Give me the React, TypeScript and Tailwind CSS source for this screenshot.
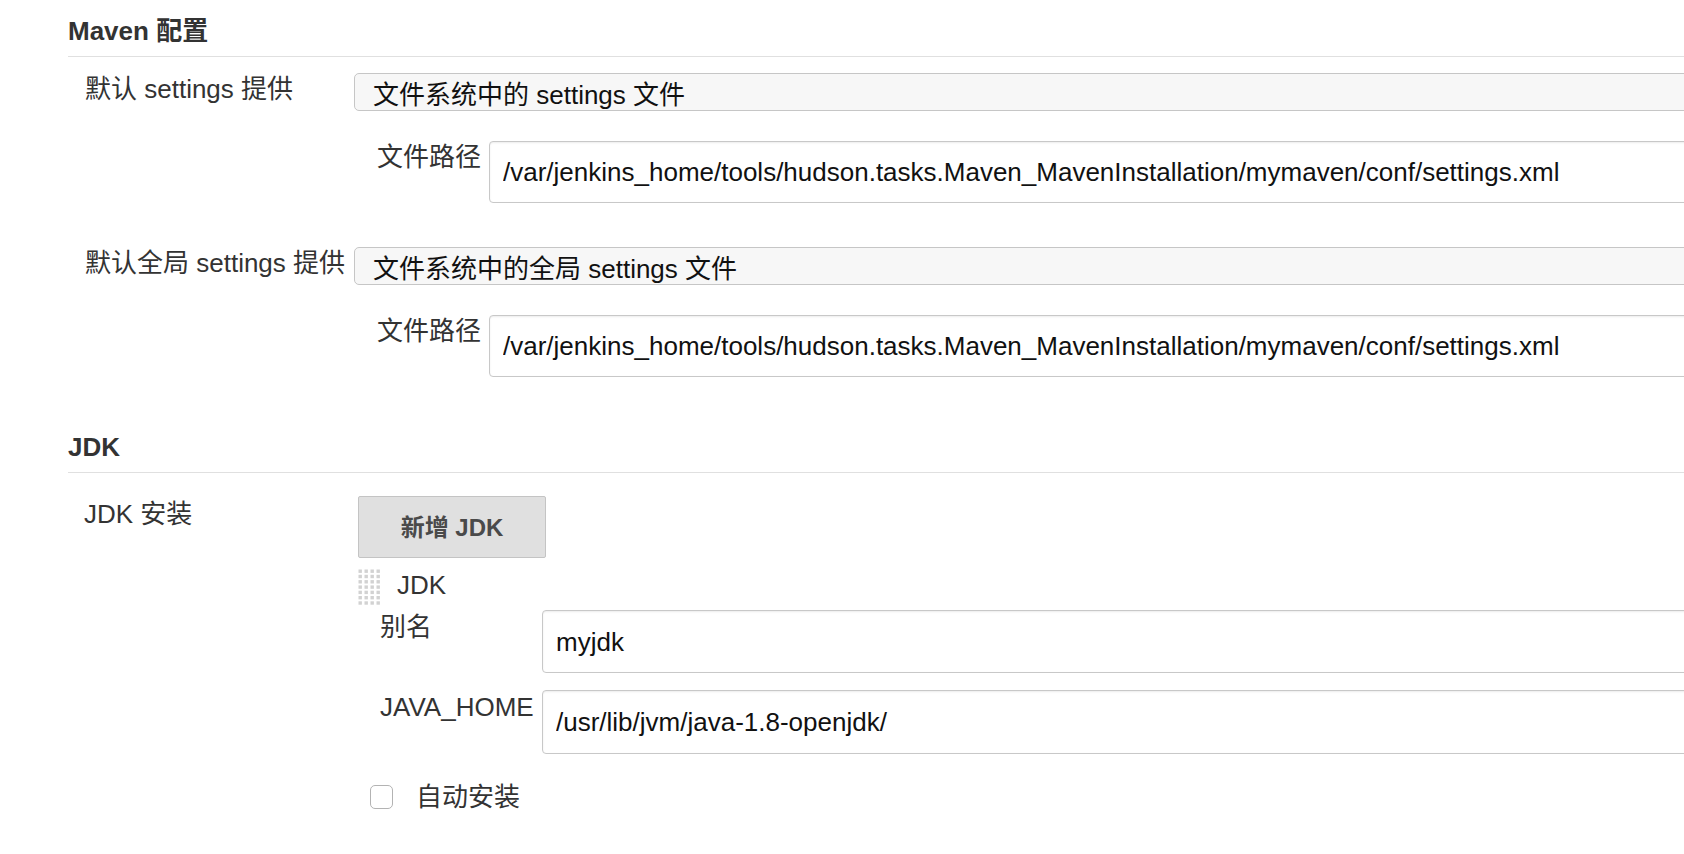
import React from 'react'

const SETTINGS_PATH = '/var/jenkins_home/tools/hudson.tasks.Maven_MavenInstallation/mymaven/conf/settings.xml'

function SectionHeader({ title, className = '' }: { title: string; className?: string }) {
  return (
    <div className={`border-b border-[#e0e0e0] pb-[10px] text-[26px] font-bold leading-[30px] text-[#333] ${className}`}>
      {title}
    </div>
  )
}

function SelectBox({ children }: { children: React.ReactNode }) {
  return (
    <div className="h-[38px] overflow-hidden rounded-[5px] border border-[#c6c6c6] bg-[#f7f7f7] pl-[18px] pt-[6px] text-[#111] whitespace-nowrap">
      {children}
    </div>
  )
}

function TextInput({ value, height = 'h-[62px]' }: { value: string; height?: string }) {
  return (
    <div className={`flex ${height} flex-1 items-center rounded-[4px] border border-[#c8c8c8] bg-white pl-[13px] shadow-[inset_0_1px_2px_rgba(0,0,0,0.08)]`}>
      <input
        readOnly
        value={value}
        className="w-full bg-transparent text-[26px] leading-[30px] text-[#111] outline-none"
      />
    </div>
  )
}

// dotted grip on the left of a repeatable block
function DragHandle() {
  const dots = []
  for (let r = 0; r < 7; r++) {
    for (let c = 0; c < 4; c++) {
      dots.push(<rect key={`${r}-${c}`} x={0.5 + c * 6} y={0.5 + r * 5.3} width="3.4" height="3.4" fill="#d2d2d2" />)
    }
  }
  return (
    <svg width="24" height="37" viewBox="0 0 24 37" className="shrink-0">
      {dots}
    </svg>
  )
}

export default function App() {
  return (
    <div className="h-screen w-full overflow-hidden bg-white font-['Liberation_Sans','Noto_Sans_CJK_SC',sans-serif] text-[26px] leading-[30px] text-[#333]">
      <div className="w-[1720px] pl-[68px]">
        {/* Maven section */}
        <SectionHeader title="Maven 配置" className="pt-[16px]" />

        <div className="flex pt-[16px]">
          <div className="w-[286px] shrink-0 pl-[17px] pt-[1px] whitespace-nowrap">默认 settings 提供</div>
          <div className="flex-1">
            <SelectBox>文件系统中的 settings 文件</SelectBox>
            <div className="mt-[30px] flex">
              <div className="w-[135px] shrink-0 pl-[23px] pt-[1px]">文件路径</div>
              <TextInput value={SETTINGS_PATH} />
            </div>
          </div>
        </div>

        <div className="mt-[44px] flex">
          <div className="w-[286px] shrink-0 pl-[17px] pt-[1px] whitespace-nowrap">默认全局 settings 提供</div>
          <div className="flex-1">
            <SelectBox>文件系统中的全局 settings 文件</SelectBox>
            <div className="mt-[30px] flex">
              <div className="w-[135px] shrink-0 pl-[23px] pt-[1px]">文件路径</div>
              <TextInput value={SETTINGS_PATH} />
            </div>
          </div>
        </div>

        {/* JDK section */}
        <SectionHeader title="JDK" className="mt-[55px]" />

        <div className="flex pt-[23px]">
          <div className="w-[286px] shrink-0 pl-[16px] pt-[3px]">JDK 安装</div>
          <div className="flex-1">
            <button className="ml-[4px] flex h-[62px] w-[188px] items-center justify-center rounded-[2px] border border-[#c4c4c4] bg-[#e0e0e0] pt-[2px] text-[24px] font-bold text-[#4a4a4a]">
              新增 JDK
            </button>
            <div className="mt-[11px] flex items-start">
              <div className="ml-[4px]">
                <DragHandle />
              </div>
              <div className="ml-[15px] pt-[1px]">JDK</div>
            </div>
            <div className="mt-[4px] flex">
              <div className="w-[188px] shrink-0 pl-[26px] pt-[2px]">别名</div>
              <TextInput value="myjdk" height="h-[63px]" />
            </div>
            <div className="mt-[17px] flex">
              <div className="w-[188px] shrink-0 pl-[26px] pt-[2px] whitespace-nowrap">JAVA_HOME</div>
              <TextInput value="/usr/lib/jvm/java-1.8-openjdk/" height="h-[64px]" />
            </div>
            <div className="mt-[28px] flex items-center">
              <span className="ml-[16px] h-[24px] w-[23px] shrink-0 rounded-[5px] border border-[#b3b3b3] bg-white" />
              <span className="ml-[23px]">自动安装</span>
            </div>
          </div>
        </div>
      </div>
    </div>
  )
}
